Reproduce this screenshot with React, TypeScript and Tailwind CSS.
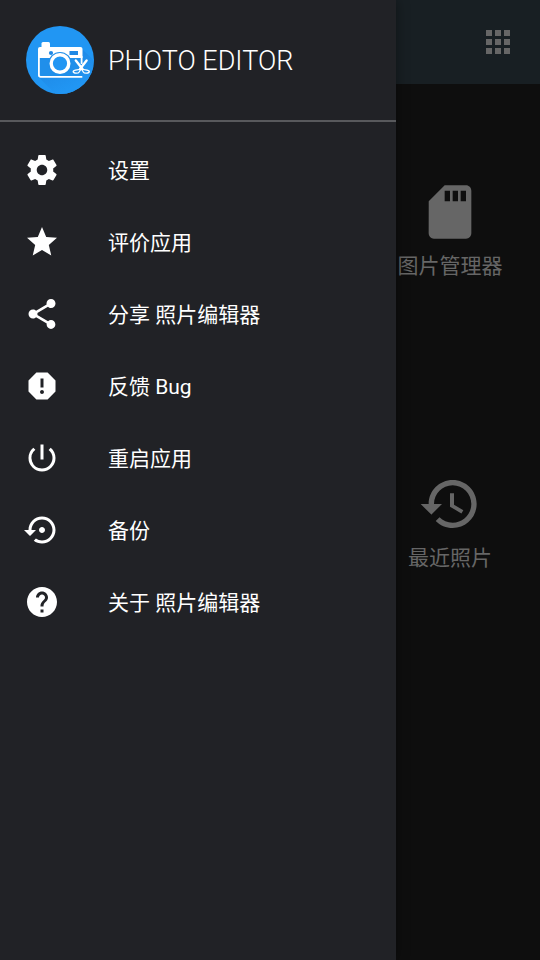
import type { ReactNode } from "react";
import {
  MdApps,
  MdHelp,
  MdPowerSettingsNew,
  MdShare,
  MdStar,
} from "react-icons/md";

function Glyph({ d, className }: { d: string; className: string }) {
  return (
    <svg viewBox="0 0 24 24" fill="currentColor" className={className} aria-hidden="true">
      <path d={d} />
    </svg>
  );
}

const SETTINGS =
  "M19.43 12.98c.04-.32.07-.64.07-.98s-.03-.66-.07-.98l2.11-1.65c.19-.15.24-.42.12-.64l-2-3.46c-.12-.22-.39-.3-.61-.22l-2.49 1c-.52-.4-1.08-.73-1.69-.98l-.38-2.65C14.46 2.18 14.25 2 14 2h-4c-.25 0-.46.18-.49.42l-.38 2.65c-.61.25-1.17.59-1.69.98l-2.49-1c-.23-.09-.49 0-.61.22l-2 3.46c-.13.22-.07.49.12.64l2.11 1.65c-.04.32-.07.65-.07.98s.03.66.07.98l-2.11 1.65c-.19.15-.24.42-.12.64l2 3.46c.12.22.39.3.61.22l2.49-1c.52.4 1.08.73 1.69.98l.38 2.65c.03.24.24.42.49.42h4c.25 0 .46-.18.49-.42l.38-2.65c.61-.25 1.17-.59 1.69-.98l2.49 1c.23.09.49 0 .61-.22l2-3.46c.12-.22.07-.49-.12-.64l-2.11-1.65zM12 15.5c-1.93 0-3.5-1.57-3.5-3.5s1.57-3.5 3.5-3.5 3.5 1.57 3.5 3.5-1.57 3.5-3.5 3.5z";
const REPORT =
  "M15.73 3H8.27L3 8.27v7.46L8.27 21h7.46L21 15.73V8.27L15.73 3zM12 17.3c-.72 0-1.3-.58-1.3-1.3 0-.72.58-1.3 1.3-1.3.72 0 1.3.58 1.3 1.3 0 .72-.58 1.3-1.3 1.3zm1-4.3h-2V7h2v6z";
const RESTORE =
  "M14 12c0-1.1-.9-2-2-2s-2 .9-2 2 .9 2 2 2 2-.9 2-2zm-2-9c-4.97 0-9 4.03-9 9H0l4 4 4-4H5c0-3.87 3.13-7 7-7s7 3.13 7 7-3.13 7-7 7c-1.51 0-2.91-.49-4.06-1.3l-1.42 1.44C8.04 20.3 9.94 21 12 21c4.97 0 9-4.03 9-9s-4.03-9-9-9z";
const SD_CARD =
  "M18 2h-8L4.02 8 4 20c0 1.1.9 2 2 2h12c1.1 0 2-.9 2-2V4c0-1.1-.9-2-2-2zm-6 6h-2V4h2v4zm3 0h-2V4h2v4zm3 0h-2V4h2v4z";
const HISTORY =
  "M13 3c-4.97 0-9 4.03-9 9H1l3.89 3.89.07.14L9 12H6c0-3.87 3.13-7 7-7s7 3.13 7 7-3.13 7-7 7c-1.93 0-3.68-.79-4.94-2.06l-1.42 1.42C8.27 19.99 10.51 21 13 21c4.97 0 9-4.03 9-9s-4.03-9-9-9zm-1 5v5l4.28 2.54.72-1.21-3.5-2.08V8H12z";

function Logo() {
  return (
    <svg viewBox="0 0 68 68" className="size-[68px] shrink-0" aria-hidden="true">
      <defs>
        <clipPath id="disc">
          <circle cx="34" cy="34" r="34" />
        </clipPath>
        <linearGradient id="shade" x1="0" y1="0" x2="0.6" y2="1">
          <stop offset="0.3" stopColor="#1e88e5" />
          <stop offset="0.9" stopColor="#2196f3" />
        </linearGradient>
      </defs>
      <circle cx="34" cy="34" r="34" fill="#2196f3" />
      {/* long shadow falling to the lower right */}
      <path d="M12.500 51l17 17h38V34L56 23v28z" fill="url(#shade)" clipPath="url(#disc)" />
      <path d="M13 32h43v18H13z" fill="#208fea" />
      <rect x="15.500" y="16" width="8.500" height="7" rx="1.500" fill="#fff" />
      <path d="M14 21h40.500a2 2 0 0 1 2 2v9H12v-9a2 2 0 0 1 2-2z" fill="#fff" />
      <path d="M12.900 30v19a1.800 1.800 0 0 0 1.800 1.800H56.300" fill="none" stroke="#fff" strokeWidth="1.800" />
      <path d="M55.600 30v8" stroke="#fff" strokeWidth="1.800" />
      <circle cx="25" cy="27" r="2.100" fill="#1e88e5" />
      <rect x="43.500" y="25" width="8.500" height="4" fill="#1e88e5" />
      <circle cx="34" cy="37.500" r="11.600" fill="#208fea" />
      <circle cx="34" cy="37.500" r="8.800" fill="#2196f3" stroke="#fff" strokeWidth="3.400" />
      <g fill="none" stroke="#fff" strokeLinecap="round">
        <path d="M49.800 34.500l6.700 8.500M60.600 34.500L54 43" strokeWidth="2.400" />
        <path d="M56.500 43c1 1.500 6.300 0 6.800 2.500.2 2-5 2.300-6 .5-.7-1-1-2-1.900-3M54 43c-1 1.500-6.300 0-6.800 2.500-.2 2 5 2.300 6 .5.700-1 1-2 1.900-3" strokeWidth="1.300" />
      </g>
    </svg>
  );
}

function Tile({ icon, label, place }: { icon: string; label: string; place: string }) {
  return (
    <button type="button" className={`${place} flex flex-col items-center justify-center gap-2`}>
      <Glyph d={icon} className="size-16" />
      <span className="text-[21px] leading-7">{label}</span>
    </button>
  );
}

const menu: { icon: ReactNode; label: string }[] = [
  { icon: <Glyph d={SETTINGS} className="size-9" />, label: "设置" },
  { icon: <MdStar className="size-9" />, label: "评价应用" },
  { icon: <MdShare className="size-9" />, label: "分享 照片编辑器" },
  { icon: <Glyph d={REPORT} className="size-9" />, label: "反馈 Bug" },
  { icon: <MdPowerSettingsNew className="size-9" />, label: "重启应用" },
  { icon: <Glyph d={RESTORE} className="size-9" />, label: "备份" },
  { icon: <MdHelp className="size-9" />, label: "关于 照片编辑器" },
];

export default function App() {
  return (
    <div className="relative flex min-h-screen flex-col bg-[#0e0e0e] font-[Roboto,'Noto_Sans_CJK_SC',sans-serif] text-[#666666]">
      <header className="flex h-21 items-center justify-end bg-[#181f23] px-6">
        <button type="button" aria-label="应用">
          <MdApps className="size-9" />
        </button>
      </header>
      <main className="grid flex-1 grid-cols-3 grid-rows-3">
        <Tile icon={SD_CARD} label="图片管理器" place="col-start-3 row-start-1" />
        <Tile icon={HISTORY} label="最近照片" place="col-start-3 row-start-2" />
      </main>

      <aside className="absolute inset-y-0 left-0 w-[396px] max-w-4/5 bg-[#212226] text-white shadow-[0_0_12px_rgba(0,0,0,0.4)]">
        <div className="flex items-center gap-3.5 border-b-2 border-[#58595c] p-[26px]">
          <Logo />
          <h1 className="pt-0.5 text-[27px] leading-9 font-light">PHOTO EDITOR</h1>
        </div>
        <nav className="py-3">
          <ul>
            {menu.map((item) => (
              <li key={item.label}>
                <button type="button" className="flex h-18 w-full items-center gap-12 px-6 text-left text-[21px] leading-7">
                  {item.icon}
                  <span className="pt-0.5">{item.label}</span>
                </button>
              </li>
            ))}
          </ul>
        </nav>
      </aside>
    </div>
  );
}
